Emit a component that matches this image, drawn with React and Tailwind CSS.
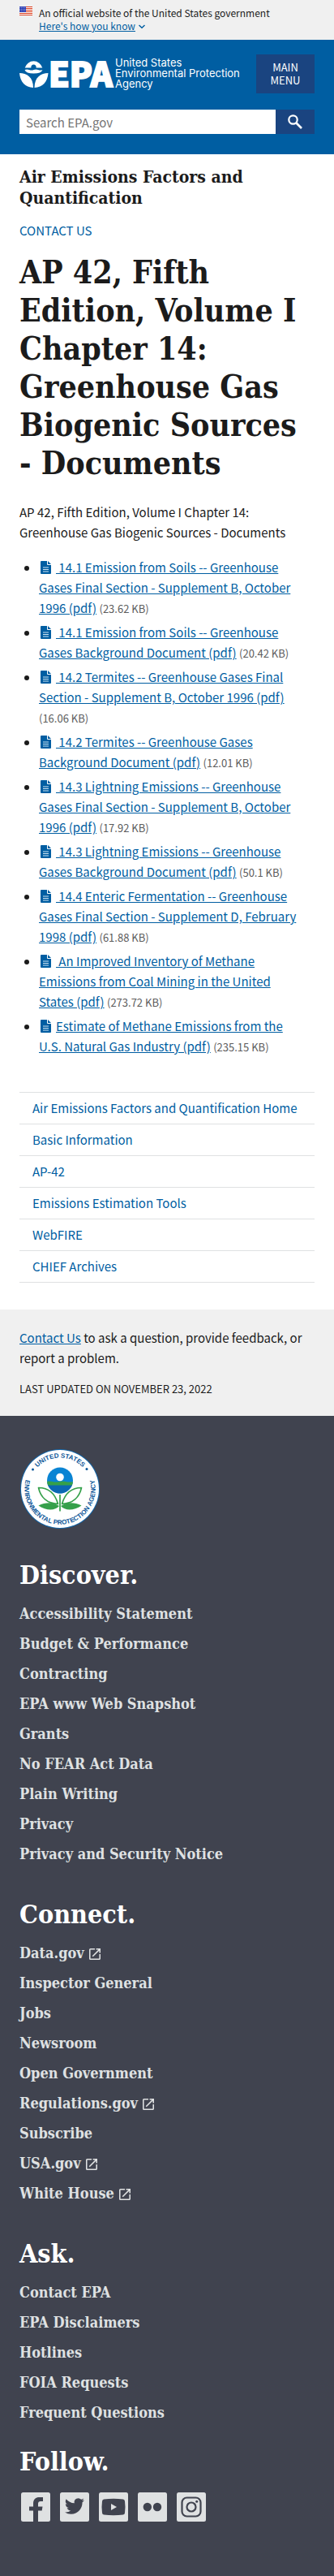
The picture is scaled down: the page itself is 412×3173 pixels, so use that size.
import React from "react";

const documents = [
  [" 14.1 Emission from Soils -- Greenhouse Gases Final Section - Supplement B, October 1996 (pdf)", "(23.62 KB)"],
  [" 14.1 Emission from Soils -- Greenhouse Gases Background Document (pdf)", "(20.42 KB)"],
  [" 14.2 Termites -- Greenhouse Gases Final Section - Supplement B, October 1996 (pdf)", "(16.06 KB)"],
  [" 14.2 Termites -- Greenhouse Gases Background Document (pdf)", "(12.01 KB)"],
  [" 14.3 Lightning Emissions -- Greenhouse Gases Final Section - Supplement B, October 1996 (pdf)", "(17.92 KB)"],
  [" 14.3 Lightning Emissions -- Greenhouse Gases Background Document (pdf)", "(50.1 KB)"],
  [" 14.4 Enteric Fermentation -- Greenhouse Gases Final Section - Supplement D, February 1998 (pdf)", "(61.88 KB)"],
  [" An Improved Inventory of Methane Emissions from Coal Mining in the United States (pdf)", "(273.72 KB)"],
  ["Estimate of Methane Emissions from the U.S. Natural Gas Industry (pdf)", "(235.15 KB)"],
];

const sideLinks = [
  "Air Emissions Factors and Quantification Home",
  "Basic Information",
  "AP-42",
  "Emissions Estimation Tools",
  "WebFIRE",
  "CHIEF Archives",
];

const footerGroups = [
  {
    title: "Discover.",
    links: ["Accessibility Statement", "Budget & Performance", "Contracting", "EPA www Web Snapshot", "Grants", "No FEAR Act Data", "Plain Writing", "Privacy", "Privacy and Security Notice"],
  },
  {
    title: "Connect.",
    links: ["Data.gov", "Inspector General", "Jobs", "Newsroom", "Open Government", "Regulations.gov", "Subscribe", "USA.gov", "White House"],
  },
  {
    title: "Ask.",
    links: ["Contact EPA", "EPA Disclaimers", "Hotlines", "FOIA Requests", "Frequent Questions"],
  },
];

const externalLinks = new Set(["Data.gov", "Regulations.gov", "USA.gov", "White House"]);

function Flag() {
  return (
    <svg className="h-[11px] w-4 shrink-0" viewBox="0 0 16 11" aria-hidden="true">
      <rect width="16" height="11" fill="#fff" />
      {[0, 2, 4, 6, 8, 10].map((y) => (
        <rect key={y} y={y} width="16" height="1" fill="#db3e1f" />
      ))}
      <rect width="8" height="7" fill="#1e33b1" />
      {[1, 3, 5].map((y) =>
        [1, 3, 5, 7].map((x) => <circle key={`${x}-${y}`} cx={x - 0.2} cy={y + 0.3} r="0.5" fill="#fff" />)
      )}
    </svg>
  );
}

function EpaLogo() {
  return (
    <svg className="h-10 w-[270px] overflow-visible" viewBox="0 0 270 40" role="img" aria-label="EPA home">
      <g fill="#fff">
        <path d="M6.700 12.600A11.200 11.200 0 0 1 28.300 12.600H20.600A3.200 3.200 0 1 0 14.400 12.600Z" />
        <path d="M6.500 15q2.800-1.200 5.600 0t5.500 0 5.500 0 5.400 0Q27 19.500 17.500 19.500T6.500 15Z" />
        <path d="M0 19C9 19 17 24 17 37 7 36.500 1 30 0 19Z" />
        <path d="M35.500 19C26.500 19 18.500 24 18.500 37 28.500 36.500 34.500 30 35.500 19Z" />
      </g>
      <text x="36" y="36" fill="#fff" stroke="#fff" strokeWidth="2" fontFamily="Noto Sans CJK SC, sans-serif" fontWeight="900" fontSize="41">
        EPA
      </text>
      <g fill="#fff" fontFamily="Inter, Liberation Sans, sans-serif" fontSize="13">
        <text x="118" y="11">United States</text>
        <text x="118" y="24">Environmental Protection</text>
        <text x="118" y="37">Agency</text>
      </g>
    </svg>
  );
}

function EpaSeal() {
  return (
    <svg className="block size-[100px]" viewBox="0 0 100 100" role="img" aria-label="EPA seal">
      <defs>
        <path id="seal-top" d="M11.500 50A38.500 38.500 0 0 1 88.500 50" />
        <path id="seal-bottom" d="M50 6.300A43.700 43.700 0 0 0 50 93.700A43.700 43.700 0 0 0 50 6.300" />
        <clipPath id="seal-globe">
          <circle cx="50" cy="39.500" r="16" />
        </clipPath>
      </defs>
      <circle cx="50" cy="50" r="49" fill="#1263a5" />
      <circle cx="50" cy="50" r="48" fill="#fff" />
      <g fill="#0d5799" fontFamily="Liberation Sans, Arial, sans-serif" fontWeight="700">
        <text fontSize="8" textAnchor="middle">
          <textPath href="#seal-top" startOffset="50%">UNITED STATES</textPath>
        </text>
        <text fontSize="8" textAnchor="middle">
          <textPath href="#seal-bottom" startOffset="50%">ENVIRONMENTAL PROTECTION AGENCY</textPath>
        </text>
        <circle cx="16.500" cy="26" r="1.500" />
        <circle cx="83" cy="25.500" r="1.500" />
      </g>
      <g clipPath="url(#seal-globe)">
        <rect x="33" y="23" width="34" height="34" fill="#0a84d3" />
        <rect x="33" y="45" width="34" height="12" fill="#0b67b2" />
        <path d="M33 41q4-1 8 0t8 0 8 0 10 0V45.500H33Z" fill="#35a04a" />
      </g>
      <circle cx="50" cy="35.500" r="4.800" fill="#fff" />
      <g fill="none" stroke="#35a04a" strokeWidth="1.700" strokeLinejoin="round">
        <path d="M23.500 48.500C36 48.500 44 56 47.500 68.500 34 68 26 60 23.500 48.500Z" />
        <path d="M76.500 48.500C64 48.500 56 56 52.500 68.500 66 68 74 60 76.500 48.500Z" />
        <path d="M50 57V77.500" />
      </g>
      <g fill="#35a04a">
        <path d="M23.500 70.500C32 66 42 66 49 71 44 77 33 77 23.500 70.500Z" />
        <path d="M76.500 70.500C68 66 58 66 51 71 56 77 67 77 76.500 70.500Z" />
      </g>
    </svg>
  );
}

function FileIcon() {
  return (
    <svg className="mr-1.5 ml-0.5 inline-block h-4 w-[13px] align-[-2px]" viewBox="0 0 13 16" aria-hidden="true">
      <path d="M0 1A1 1 0 0 1 1 0H8V4A1 1 0 0 0 9 5H13V15A1 1 0 0 1 12 16H1A1 1 0 0 1 0 15Z" fill="#005ea2" />
      <path d="M9 0L13 4H9Z" fill="#005ea2" />
      <path d="M3 8H10M3 10.500H10M3 13H10" stroke="#cfe3f3" strokeWidth="1" />
    </svg>
  );
}

function ExternalIcon() {
  return (
    <svg className="ml-1.5 inline-block size-[14px] align-[-2px]" viewBox="3 3 18 18" fill="#dfe1e2" aria-label="external link">
      <path d="M19 19H5V5h7V3H5a2 2 0 0 0-2 2v14a2 2 0 0 0 2 2h14c1.100 0 2-.9 2-2v-7h-2v7zM14 3v2h3.590l-9.830 9.830 1.410 1.410L19 6.410V10h2V3h-7z" />
    </svg>
  );
}

const socials = [
  {
    name: "Facebook",
    art: <path d="M15 36V22.500H10V17.500H15V14C15 8.500 18 6 22.500 6H27V11H24Q21 11 21 14V17.500H26.500L25.700 22.500H21V36Z" fill="#40434f" />,
  },
  {
    name: "Twitter",
    art: (
      <path
        transform="translate(6 5)"
        d="M23.950 4.570a10 10 0 0 1-2.820.77 4.960 4.960 0 0 0 2.160-2.720c-.95.55-2 .96-3.130 1.180a4.920 4.920 0 0 0-8.380 4.480C7.690 8.090 4.070 6.130 1.640 3.160a4.930 4.930 0 0 0 1.520 6.570 4.900 4.900 0 0 1-2.230-.61v.06a4.920 4.920 0 0 0 3.950 4.830 5 5 0 0 1-2.210.08 4.940 4.940 0 0 0 4.600 3.420A9.870 9.870 0 0 1 0 19.540a14 14 0 0 0 7.550 2.210c9.050 0 14-7.500 14-13.980 0-.21 0-.42-.02-.63a9.940 9.940 0 0 0 2.460-2.550z"
        fill="#40434f"
      />
    ),
  },
  {
    name: "YouTube",
    art: (
      <>
        <path d="M6 8.500Q18 7 30 8.500Q32 9 32 11Q33 18 32 25Q32 27 30 27.500Q18 29 6 27.500Q4 27 4 25Q3 18 4 11Q4 9 6 8.500Z" fill="#40434f" />
        <path d="M15 14L22 18L15 22Z" fill="#dfe1e2" />
      </>
    ),
  },
  {
    name: "Flickr",
    art: (
      <>
        <circle cx="11.800" cy="18" r="5.200" fill="#40434f" />
        <circle cx="24" cy="18" r="5.200" fill="#40434f" />
      </>
    ),
  },
  {
    name: "Instagram",
    art: (
      <>
        <rect x="6.500" y="6.500" width="23" height="23" rx="6" fill="none" stroke="#40434f" strokeWidth="2.200" />
        <circle cx="18" cy="18" r="5.500" fill="none" stroke="#40434f" strokeWidth="2.200" />
        <circle cx="24.700" cy="11.300" r="1.500" fill="#40434f" />
      </>
    ),
  },
];

export default function App() {
  return (
    <div className="bg-white font-['Noto_Sans_CJK_SC',sans-serif] text-[15px] leading-[25px] text-[#1b1b1b]">
      <section className="flex items-start gap-2 bg-[#f0f0f0] px-6 pt-2 pb-[9px] text-[12px] leading-4" aria-label="Official government website">
        <Flag />
        <div>
          <p>An official website of the United States government</p>
          <button type="button" className="flex items-center gap-1 text-[#005ea2]">
            <span className="underline">Here's how you know</span>
            <svg className="h-2 w-2" viewBox="0 0 8 8" fill="none" stroke="#005ea2" strokeWidth="1.500" aria-hidden="true">
              <path d="M0.500 3L4 6.300L7.500 3" />
            </svg>
          </button>
        </div>
      </section>

      <header className="bg-[#005ea2] px-6 pt-[18px] pb-[25px]">
        <div className="flex items-center justify-between">
          <a href="#home">
            <EpaLogo />
          </a>
          <button type="button" className="h-12 w-[72px] bg-[#1a4480] px-2 text-[13px] leading-4 text-white">
            MAIN MENU
          </button>
        </div>
        <form className="mt-5 flex h-[30px]" role="search" onSubmit={(e) => e.preventDefault()}>
          <label htmlFor="search" className="sr-only">Search</label>
          <input id="search" type="search" placeholder="Search EPA.gov" className="min-w-0 flex-1 bg-white px-2 text-[15px] leading-[25px] placeholder:text-[#757575]" />
          <button type="submit" aria-label="Search" className="flex w-12 items-center justify-center bg-[#1a4480]">
            <svg className="size-[18px]" viewBox="0 0 18 18" fill="none" stroke="#fff" aria-hidden="true">
              <circle cx="6.500" cy="6.500" r="5.200" strokeWidth="2.200" />
              <path d="M10.500 10.500L17 17" strokeWidth="2.600" />
            </svg>
          </button>
        </form>
      </header>

      <main className="px-6 pt-[15px] pb-[33px]">
        <h2 className="font-['DejaVu_Serif_Condensed','DejaVu_Serif',serif] text-[21px] leading-[26px] font-bold">Air Emissions Factors and Quantification</h2>
        <a href="#contact" className="mt-[14px] block text-[#005ea2]">CONTACT US</a>
        <h1 className="mt-4 font-['DejaVu_Serif_Condensed','DejaVu_Serif',serif] text-[39px] leading-[47px] font-bold">
          AP 42, Fifth Edition, Volume I Chapter 14: Greenhouse Gas Biogenic Sources -{"\u00a0"}Documents
        </h1>
        <p className="mt-6">AP 42, Fifth Edition, Volume I Chapter 14: Greenhouse Gas Biogenic Sources - Documents</p>
        <ul className="mt-[18px] flex list-disc flex-col gap-[5px] pr-4 pl-6">
          {documents.map(([title, size]) => (
            <li key={title}>
              <a href="#document" className="text-[#005ea2]">
                <FileIcon />
                <span className="underline">{title}</span>
              </a>{" "}
              <span className="text-[13px] leading-none text-[#5c5c5c]">{size}</span>
            </li>
          ))}
        </ul>

        <nav className="mt-11 border-t border-[#dfe1e2]" aria-label="Side navigation">
          <ul>
            {sideLinks.map((link) => (
              <li key={link} className="border-b border-[#dfe1e2]">
                <a href="#section" className="block px-4 py-[9px] leading-5 text-[#005ea2]">{link}</a>
              </li>
            ))}
          </ul>
        </nav>
      </main>

      <section className="bg-[#f0f0f0] px-6 pt-[22px] pb-[21px]">
        <p>
          <a href="#contact" className="text-[#005ea2] underline">Contact Us</a> to ask a question, provide feedback, or report a problem.
        </p>
        <p className="mt-[13px] text-[13px]">LAST UPDATED ON NOVEMBER 23, 2022</p>
      </section>

      <footer className="bg-[#40434f] px-6 pt-10 pb-[67px] font-['DejaVu_Serif_Condensed','DejaVu_Serif',serif] font-bold text-[#dfe1e2]">
        <EpaSeal />
        <div className="mt-[38px] flex flex-col gap-[38px]">
          {footerGroups.map((group) => (
            <section key={group.title}>
              <h2 className="text-[32px] leading-[37px] text-white">{group.title}</h2>
              <ul className="mt-[10px]">
                {group.links.map((link) => (
                  <li key={link} className="py-[6px] text-[18px] leading-[25px]">
                    <a href="#footer-link">
                      {link}
                      {externalLinks.has(link) && <ExternalIcon />}
                    </a>
                  </li>
                ))}
              </ul>
            </section>
          ))}
        </div>
        <h2 className="mt-6 text-[32px] leading-[37px] text-white">Follow.</h2>
        <ul className="mt-[19px] ml-0.5 flex gap-3">
          {socials.map(({ name, art }) => (
            <li key={name}>
              <a href="#social" aria-label={name} className="block">
                <svg className="block size-9" viewBox="0 0 36 36" aria-hidden="true">
                  <rect width="36" height="36" rx="2.500" fill="#dfe1e2" />
                  {art}
                </svg>
              </a>
            </li>
          ))}
        </ul>
      </footer>
    </div>
  );
}
